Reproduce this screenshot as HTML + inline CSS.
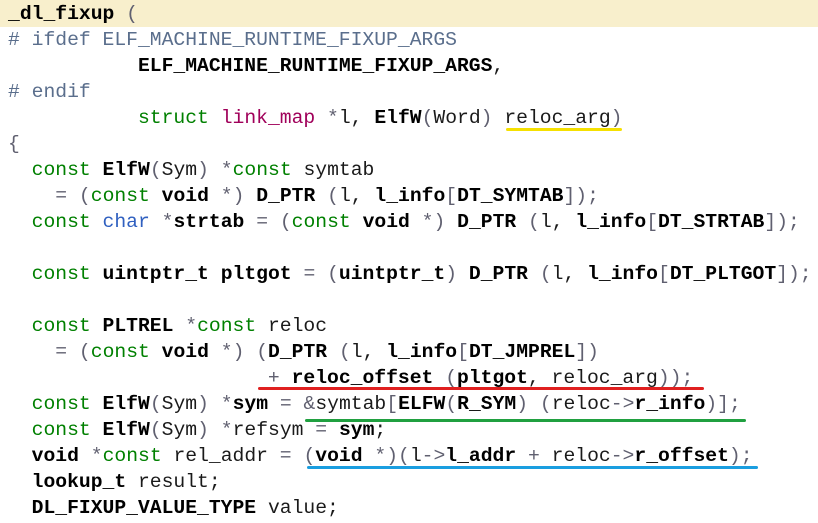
<!DOCTYPE html>
<html><head><meta charset="utf-8"><style>
html,body{margin:0;padding:0;background:#fff;width:818px;height:523px;overflow:hidden}
.l{position:absolute;left:8px;height:26px;line-height:26px;font-family:"Liberation Mono",monospace;font-size:19.7px;white-space:pre;color:#1a1a1a}
.b{font-weight:bold;color:#000}
.g{color:#008000}
.p{color:#a0005a}
.pp{color:#5a6e8c}
.o{color:#606070}
.u{position:absolute;height:3px;border-radius:2px}
</style></head><body>
<div style="position:absolute;left:0;top:0;width:818px;height:27px;background:#f8efcc"></div>
<div class="l" style="top:1px"><span class="b">_dl_fixup</span> <span class="o">(</span></div>
<div class="l pp" style="top:27px"># ifdef ELF_MACHINE_RUNTIME_FIXUP_ARGS</div>
<div class="l" style="top:53px">           <span class="b">ELF_MACHINE_RUNTIME_FIXUP_ARGS</span>,</div>
<div class="l pp" style="top:79px"># endif</div>
<div class="l" style="top:105px">           <span class="g">struct</span> <span class="p">link_map</span> <span class="o">*</span>l, <span class="b">ElfW</span><span class="o">(</span>Word<span class="o">)</span> reloc_arg<span class="o">)</span></div>
<div class="l" style="top:131px"><span class="o">{</span></div>
<div class="l" style="top:157px">  <span class="g">const</span> <span class="b">ElfW</span><span class="o">(</span>Sym<span class="o">)</span> <span class="o">*</span><span class="g">const</span> symtab</div>
<div class="l" style="top:183px">    <span class="o">=</span> <span class="o">(</span><span class="g">const</span> <span class="b">void</span> <span class="o">*)</span> <span class="b">D_PTR</span> <span class="o">(</span>l, <span class="b">l_info</span><span class="o">[</span><span class="b">DT_SYMTAB</span><span class="o">]);</span></div>
<div class="l" style="top:209px">  <span class="g">const</span> <span class="g" style="color:#3060c0">char</span> <span class="o">*</span><span class="b">strtab</span> <span class="o">=</span> <span class="o">(</span><span class="g">const</span> <span class="b">void</span> <span class="o">*)</span> <span class="b">D_PTR</span> <span class="o">(</span>l, <span class="b">l_info</span><span class="o">[</span><span class="b">DT_STRTAB</span><span class="o">]);</span></div>
<div class="l" style="top:261px">  <span class="g">const</span> <span class="b">uintptr_t</span> <span class="b">pltgot</span> <span class="o">=</span> <span class="o">(</span><span class="b">uintptr_t</span><span class="o">)</span> <span class="b">D_PTR</span> <span class="o">(</span>l, <span class="b">l_info</span><span class="o">[</span><span class="b">DT_PLTGOT</span><span class="o">]);</span></div>
<div class="l" style="top:313px">  <span class="g">const</span> <span class="b">PLTREL</span> <span class="o">*</span><span class="g">const</span> reloc</div>
<div class="l" style="top:339px">    <span class="o">=</span> <span class="o">(</span><span class="g">const</span> <span class="b">void</span> <span class="o">*)</span> <span class="o">(</span><span class="b">D_PTR</span> <span class="o">(</span>l, <span class="b">l_info</span><span class="o">[</span><span class="b">DT_JMPREL</span><span class="o">])</span></div>
<div class="l" style="top:365px">                      <span class="o">+</span> <span class="b">reloc_offset</span> <span class="o">(</span><span class="b">pltgot</span>, reloc_arg<span class="o">));</span></div>
<div class="l" style="top:391px">  <span class="g">const</span> <span class="b">ElfW</span><span class="o">(</span>Sym<span class="o">)</span> <span class="o">*</span><span class="b">sym</span> <span class="o">=</span> <span class="o">&amp;</span>symtab<span class="o">[</span><span class="b">ELFW</span><span class="o">(</span><span class="b">R_SYM</span><span class="o">)</span> <span class="o">(</span>reloc<span class="o">-&gt;</span><span class="b">r_info</span><span class="o">)];</span></div>
<div class="l" style="top:417px">  <span class="g">const</span> <span class="b">ElfW</span><span class="o">(</span>Sym<span class="o">)</span> <span class="o">*</span>refsym <span class="o">=</span> <span class="b">sym</span>;</div>
<div class="l" style="top:443px">  <span class="b">void</span> <span class="o">*</span><span class="g">const</span> rel_addr <span class="o">=</span> <span class="o">(</span><span class="b">void</span> <span class="o">*)(</span>l<span class="o">-&gt;</span><span class="b">l_addr</span> <span class="o">+</span> reloc<span class="o">-&gt;</span><span class="b">r_offset</span><span class="o">);</span></div>
<div class="l" style="top:469px">  <span class="b">lookup_t</span> result;</div>
<div class="l" style="top:495px">  <span class="b">DL_FIXUP_VALUE_TYPE</span> value;</div>
<div class="u" style="left:506px;top:128px;width:116px;background:#f5e000"></div>
<div class="u" style="left:258px;top:387px;width:446px;background:#e02020"></div>
<div class="u" style="left:305px;top:419px;width:441px;background:#20a040"></div>
<div class="u" style="left:307px;top:466px;width:451px;background:#1a9ee0"></div>
</body></html>
